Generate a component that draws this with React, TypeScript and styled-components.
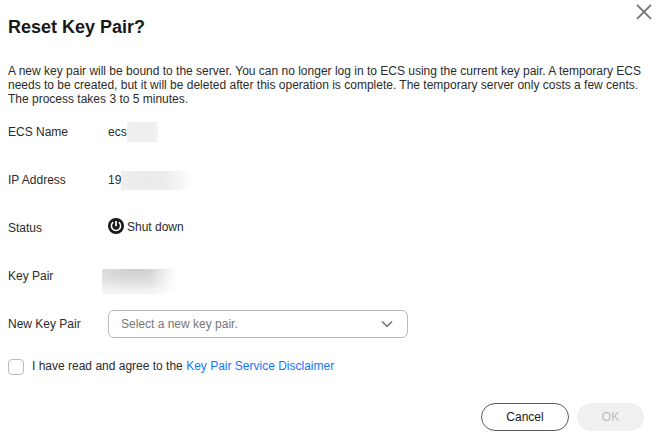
import React from "react";
import styled, { createGlobalStyle } from "styled-components";

const GlobalStyle = createGlobalStyle`
  * { box-sizing: border-box; }
  body { margin: 0; background: #fff; }
  button { font: inherit; }
`;

const Dialog = styled.section`
  width: 665px;
  height: 442px;
  padding: 0 21px 11px 8px;
  display: flex;
  flex-direction: column;
  background: #fff;
  color: #2b2b2b;
  font-family: "Liberation Sans", Arial, sans-serif;
  font-size: 12px;
  line-height: 14px;
`;

const Header = styled.header`
  display: flex;
  justify-content: space-between;
  height: 64px;
  margin-right: -8px;
`;

const Title = styled.h1`
  margin: 16px 0 0;
  font-size: 18px;
  line-height: 22px;
  font-weight: 700;
  color: #191919;
`;

const CloseButton = styled.button`
  width: 16px;
  height: 16px;
  margin-top: 4px;
  padding: 0;
  border: 0;
  background: none;
  svg { display: block; }
`;

const Message = styled.p`
  margin: 0;
  white-space: nowrap;
`;

const Line = styled.span`
  display: block;
`;

const Details = styled.dl`
  margin: 2px 0 0;
`;

const Row = styled.div`
  display: grid;
  grid-template-columns: 100px 300px;
  align-items: center;
  height: 48px;
`;

const Label = styled.dt`
  margin: 0;
`;

const Value = styled.dd`
  display: flex;
  align-items: center;
  margin: 0;
`;

const Redacted = styled.span<{ $width: number; $height: number; $fill: string; $margin?: string }>`
  width: ${(p) => p.$width}px;
  height: ${(p) => p.$height}px;
  margin: ${(p) => p.$margin ?? "0"};
  background: ${(p) => p.$fill};
`;

const StatusText = styled.span`
  margin-left: 3px;
`;

const StatusValue = styled(Value)`
  padding-bottom: 2px;
  svg { margin-top: -2px; }
`;

const Select = styled.button`
  width: 300px;
  height: 28px;
  padding: 0 14px 0 12px;
  display: flex;
  align-items: center;
  justify-content: space-between;
  border: 1px solid #bababa;
  border-radius: 6px;
  background: #fff;
  color: #777;
`;

const Agreement = styled.label`
  display: flex;
  height: 18px;
  margin-top: 11px;
`;

const Checkbox = styled.input`
  appearance: none;
  width: 16px;
  height: 16px;
  margin: 0 8px 0 0;
  border: 1px solid #bababa;
  border-radius: 4px;
  background: #fff;
`;

const Link = styled.a`
  color: #1476ff;
  text-decoration: none;
`;

const Footer = styled.footer`
  display: flex;
  justify-content: flex-end;
  gap: 8px;
  margin-top: auto;
`;

const Action = styled.button<{ $wide?: boolean }>`
  width: ${(p) => (p.$wide ? 88 : 67)}px;
  height: 28px;
  padding: 0;
  border: 1px solid #595959;
  border-radius: 14px;
  background: #fff;
  color: #191919;
  &:disabled {
    border-color: #f0f0f0;
    background: #f0f0f0;
    color: #bcbcbc;
  }
`;

const CloseIcon = () => (
  <svg width="16" height="16" viewBox="0 0 16 16" fill="none" stroke="#757575" strokeWidth="1.9">
    <path d="M1 .8 15 14.8M15 .8 1 14.8" />
  </svg>
);

const PowerIcon = () => (
  <svg width="16" height="16" viewBox="0 0 16 16" fill="none">
    <circle cx="8" cy="8" r="8" fill="#191919" />
    <path d="M5.2 4.2a4.6 4.6 0 1 0 5.6 0" stroke="#fff" strokeWidth="1.5" />
    <path d="M8 3v5.2" stroke="#fff" strokeWidth="1.7" />
  </svg>
);

const ChevronIcon = () => (
  <svg width="12" height="8" viewBox="0 0 12 8" fill="none" stroke="#777" strokeWidth="1.6">
    <path d="m1 1.5 5 4.8 5-4.8" />
  </svg>
);

export default function App() {
  return (
    <>
      <GlobalStyle />
      <Dialog role="dialog" aria-label="Reset Key Pair?">
        <Header>
          <Title>Reset Key Pair?</Title>
          <CloseButton aria-label="Close"><CloseIcon /></CloseButton>
        </Header>
        <Message>
          <Line>A new key pair will be bound to the server. You can no longer log in to ECS using the current key pair. A temporary ECS</Line>
          <Line>needs to be created, but it will be deleted after this operation is complete. The temporary server only costs a few cents.</Line>
          <Line>The process takes 3 to 5 minutes.</Line>
        </Message>
        <Details>
          <Row>
            <Label>ECS Name</Label>
            <Value>ecs<Redacted $width={31} $height={20} $fill="linear-gradient(90deg, #efefef, #eee 70%, #f2f2f2)" /></Value>
          </Row>
          <Row>
            <Label>IP Address</Label>
            <Value>19<Redacted $width={71} $height={19} $fill="linear-gradient(90deg, #efefef, #ebebeb 30%, #ececec 60%, #f5f5f5 82%, #fefefe)" /></Value>
          </Row>
          <Row>
            <Label>Status</Label>
            <StatusValue><PowerIcon /><StatusText>Shut down</StatusText></StatusValue>
          </Row>
          <Row>
            <Label>Key Pair</Label>
            <Value>
              <Redacted
                $width={78}
                $height={25}
                $margin="11px 0 0 -6px"
                $fill="linear-gradient(90deg, transparent 62%, #fff 97%), radial-gradient(ellipse 60px 22px at 32px 0, #cdcdcd, #d9d9d9 40%, transparent), linear-gradient(#e4e4e4, #f5f5f5)"
              />
            </Value>
          </Row>
          <Row>
            <Label>New Key Pair</Label>
            <Value><Select>Select a new key pair.<ChevronIcon /></Select></Value>
          </Row>
        </Details>
        <Agreement>
          <Checkbox type="checkbox" />
          <span>I have read and agree to the <Link>Key Pair Service Disclaimer</Link></span>
        </Agreement>
        <Footer>
          <Action $wide>Cancel</Action>
          <Action disabled>OK</Action>
        </Footer>
      </Dialog>
    </>
  );
}
